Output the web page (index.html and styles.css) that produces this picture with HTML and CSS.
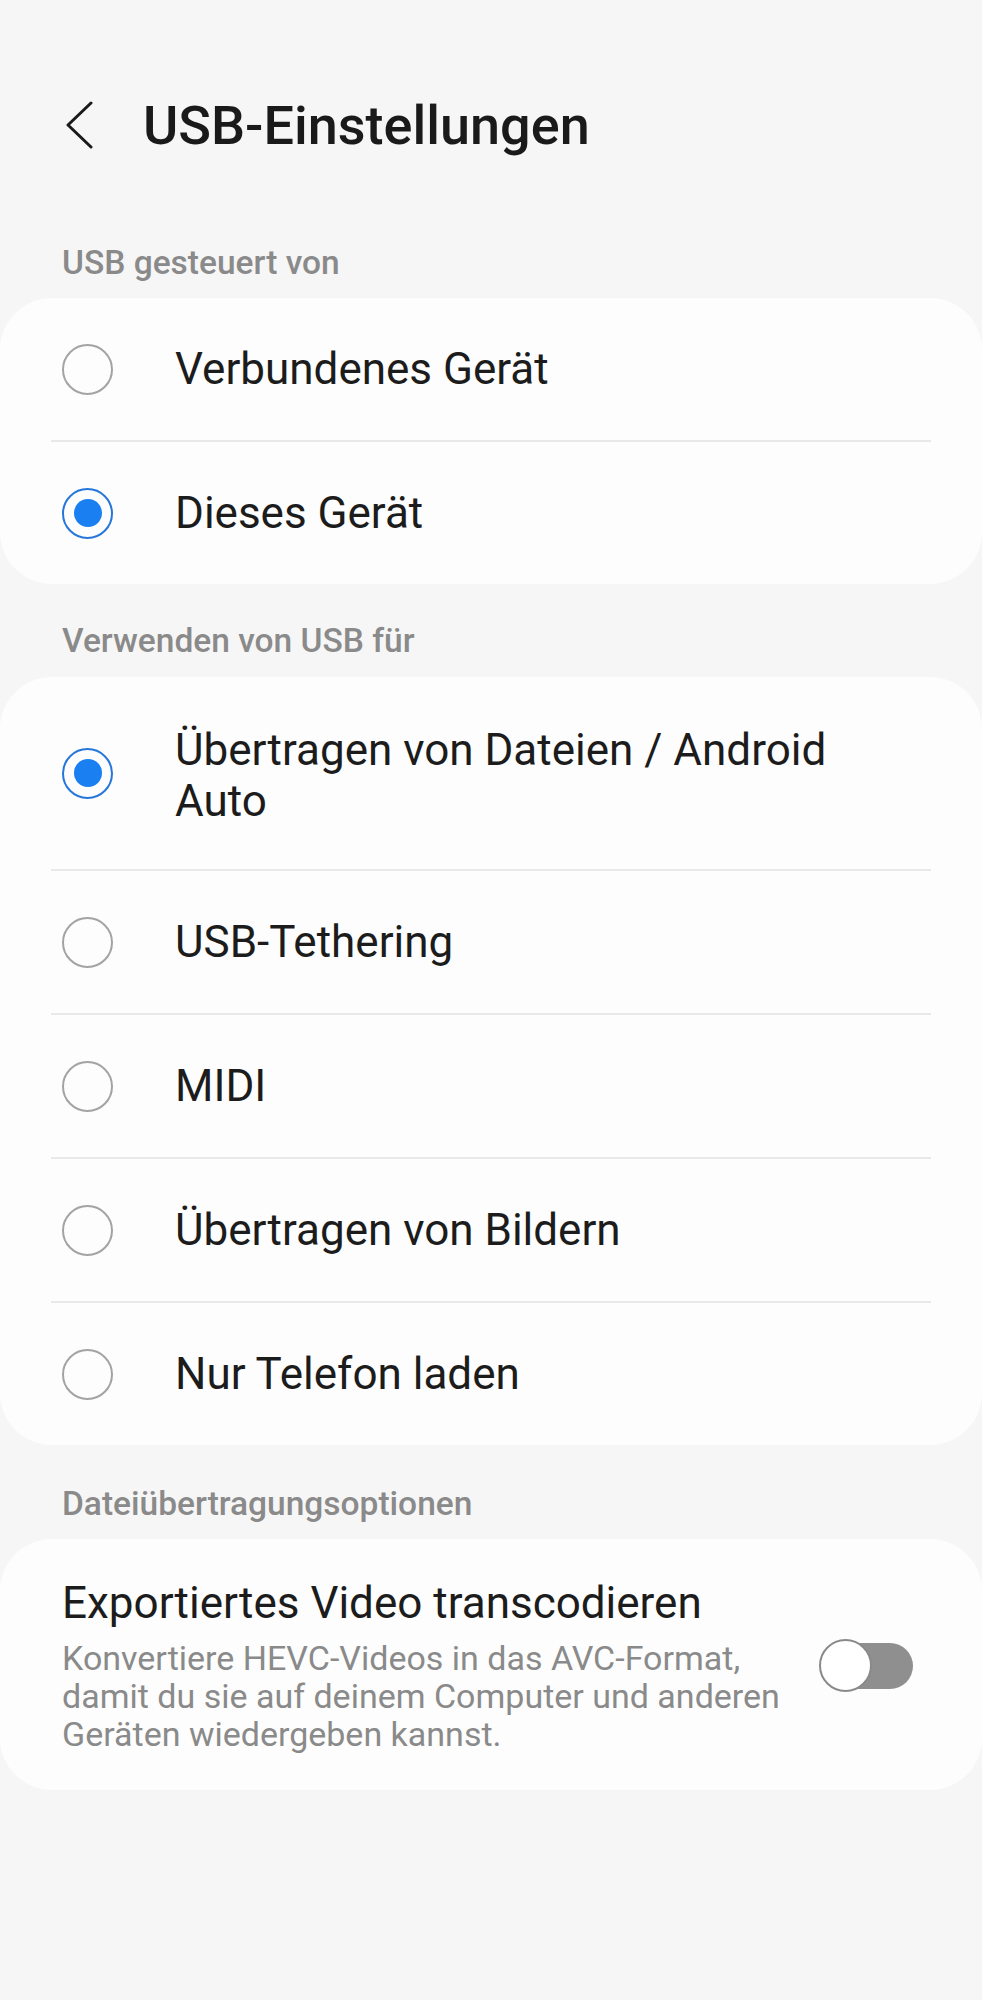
FILE: index.html
```html
<!DOCTYPE html>
<html lang="de">
<head>
  <meta charset="UTF-8">
  <meta name="viewport" content="width=device-width, initial-scale=1.0">
  <title>USB-Einstellungen</title>
  <link rel="stylesheet" href="styles.css">
</head>
<body>
  <div class="topbar">
    <svg class="back" width="30" height="48" viewBox="0 0 30 48">
      <polyline points="26,2 3,24 26,46" fill="none" stroke="#1a1a1a" stroke-width="3" stroke-linecap="round" stroke-linejoin="round"/>
    </svg>
    <h1>USB-Einstellungen</h1>
  </div>

  <div class="section-label first">USB gesteuert von</div>
  <div class="card">
    <div class="row">
      <span class="radio"></span>
      <span class="label">Verbundenes Gerät</span>
    </div>
    <div class="divider"></div>
    <div class="row">
      <span class="radio checked"></span>
      <span class="label">Dieses Gerät</span>
    </div>
  </div>

  <div class="section-label">Verwenden von USB für</div>
  <div class="card">
    <div class="row tall">
      <span class="radio checked"></span>
      <span class="label">Übertragen von Dateien / Android Auto</span>
    </div>
    <div class="divider"></div>
    <div class="row">
      <span class="radio"></span>
      <span class="label">USB-Tethering</span>
    </div>
    <div class="divider"></div>
    <div class="row">
      <span class="radio"></span>
      <span class="label">MIDI</span>
    </div>
    <div class="divider"></div>
    <div class="row">
      <span class="radio"></span>
      <span class="label">Übertragen von Bildern</span>
    </div>
    <div class="divider"></div>
    <div class="row">
      <span class="radio"></span>
      <span class="label">Nur Telefon laden</span>
    </div>
  </div>

  <div class="section-label last">Dateiübertragungsoptionen</div>
  <div class="card switch-card">
    <div class="switch-text">
      <div class="switch-title">Exportiertes Video transcodieren</div>
      <div class="switch-sub">Konvertiere HEVC-Videos in das AVC-Format, damit du sie auf deinem Computer und anderen Geräten wiedergeben kannst.</div>
    </div>
    <div class="toggle">
      <span class="track"></span>
      <span class="thumb"></span>
    </div>
  </div>
</body>
</html>
```

FILE: styles.css
```css
body {
  margin: 0;
  background-color: #f6f6f6;
  font-family: Roboto, "Liberation Sans", sans-serif;
  color: #1c1c1c;
}
.topbar {
  display: flex;
  align-items: center;
  height: 84px;
  margin-top: 83px;
  padding-left: 65px;
}
.back {
  display: block;
}
h1 {
  margin: 0 0 0 48px;
  font-size: 54px;
  font-weight: 500;
  color: #1a1a1a;
}
.section-label {
  padding: 0 62px;
  margin: 37px 0 16px;
  font-size: 33.5px;
  font-weight: 500;
  line-height: 40px;
  color: #8a8a8a;
}
.section-label.first {
  margin-top: 76px;
  margin-bottom: 15px;
}
.section-label.last {
  margin-top: 39px;
  margin-bottom: 15px;
}
.card {
  background: #fdfdfd;
  border-radius: 52px;
}
.row {
  display: flex;
  align-items: center;
  height: 142px;
  padding: 0 80px 0 62px;
}
.row.tall {
  height: 192px;
}
.row.tall .label {
  margin-top: 6px;
}
.radio {
  flex: none;
  box-sizing: border-box;
  width: 51px;
  height: 51px;
  border: 2.5px solid #a3a3a3;
  border-radius: 50%;
  display: flex;
  align-items: center;
  justify-content: center;
  margin-right: 62px;
}
.radio.checked {
  border-color: #2677dc;
}
.radio.checked::after {
  content: "";
  width: 28px;
  height: 28px;
  border-radius: 50%;
  background: #1a7ff1;
}
.label {
  max-width: 680px;
  font-size: 44px;
  line-height: 51px;
}
.divider {
  height: 2px;
  margin: 0 51px;
  background: #e8e8e8;
}
.switch-card {
  display: flex;
  align-items: center;
  padding: 39px 69px 37px 62px;
}
.switch-text {
  flex: 1;
}
.switch-title {
  font-size: 44px;
  line-height: 50px;
}
.switch-sub {
  margin-top: 11px;
  font-size: 34px;
  line-height: 38px;
  color: #8a8a8a;
}
.toggle {
  position: relative;
  flex: none;
  width: 94px;
  height: 53px;
  margin-left: 30px;
}
.track {
  position: absolute;
  left: 4px;
  right: 0;
  top: 4px;
  height: 46px;
  border-radius: 23px;
  background: #8f8f8f;
}
.thumb {
  position: absolute;
  left: 0;
  top: 0;
  box-sizing: border-box;
  width: 53px;
  height: 53px;
  border-radius: 50%;
  border: 2.5px solid #8a8a8a;
  background: #fff;
}
```
